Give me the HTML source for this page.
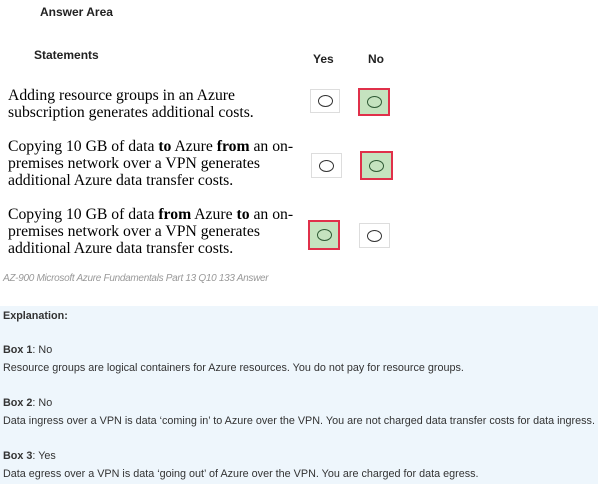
<!DOCTYPE html>
<html><head><style>
body{margin:0;width:598px;height:484px;background:#fff;position:relative;overflow:hidden;font-family:"Liberation Sans",sans-serif}
.a{position:absolute}
.h{font-weight:bold;font-size:12px;color:#222}
.s{font-family:"Liberation Serif",serif;font-size:15.7px;line-height:17px;color:#000;left:8px}
.bx{position:absolute;box-sizing:border-box;border:1px solid #ddd;background:#fff}
.bx.r{border:2px solid #e0304a;background:#c5e3bf}
.bx i{position:absolute;left:50%;top:50%;width:13px;height:10px;margin:-6px 0 0 -7.5px;border:1px solid #333;border-radius:50%}
.bx.r i{border-color:#2f5a35}
.ex{position:absolute;left:0;top:306px;width:598px;height:178px;background:#eef6fc}
.t{position:absolute;left:3px;font-size:10.8px;color:#333;white-space:nowrap}
</style></head><body>
<div class="a h" style="left:40px;top:5px">Answer Area</div>
<div class="a h" style="left:34px;top:48px">Statements</div>
<div class="a h" style="left:313px;top:52px">Yes</div>
<div class="a h" style="left:368px;top:52px">No</div>
<div class="a s" style="top:87px">Adding resource groups in an Azure<br>subscription generates additional costs.</div>
<div class="a s" style="top:138px">Copying 10 GB of data <b>to</b> Azure <b>from</b> an on-<br>premises network over a VPN generates<br>additional Azure data transfer costs.</div>
<div class="a s" style="top:206px">Copying 10 GB of data <b>from</b> Azure <b>to</b> an on-<br>premises network over a VPN generates<br>additional Azure data transfer costs.</div>
<div class="bx" style="left:310px;top:89px;width:30px;height:24px"><i></i></div>
<div class="bx r" style="left:358px;top:88px;width:32px;height:28px"><i></i></div>
<div class="bx" style="left:311px;top:153px;width:31px;height:25px"><i></i></div>
<div class="bx r" style="left:360px;top:151px;width:33px;height:29px"><i></i></div>
<div class="bx r" style="left:308px;top:220px;width:32px;height:30px"><i></i></div>
<div class="bx" style="left:359px;top:223px;width:31px;height:25px"><i></i></div>
<div class="a" style="left:3px;top:273px;font-size:10px;font-style:italic;color:#999;letter-spacing:-0.3px">AZ-900 Microsoft Azure Fundamentals Part 13 Q10 133 Answer</div>
<div class="ex"></div>
<div class="t" style="top:310px"><b>Explanation:</b></div>
<div class="t" style="top:344px"><b>Box 1</b>: No</div>
<div class="t" style="top:362px">Resource groups are logical containers for Azure resources. You do not pay for resource groups.</div>
<div class="t" style="top:397px"><b>Box 2</b>: No</div>
<div class="t" style="top:415px">Data ingress over a VPN is data ‘coming in’ to Azure over the VPN. You are not charged data transfer costs for data ingress.</div>
<div class="t" style="top:450px"><b>Box 3</b>: Yes</div>
<div class="t" style="top:468px">Data egress over a VPN is data ‘going out’ of Azure over the VPN. You are charged for data egress.</div>
</body></html>
